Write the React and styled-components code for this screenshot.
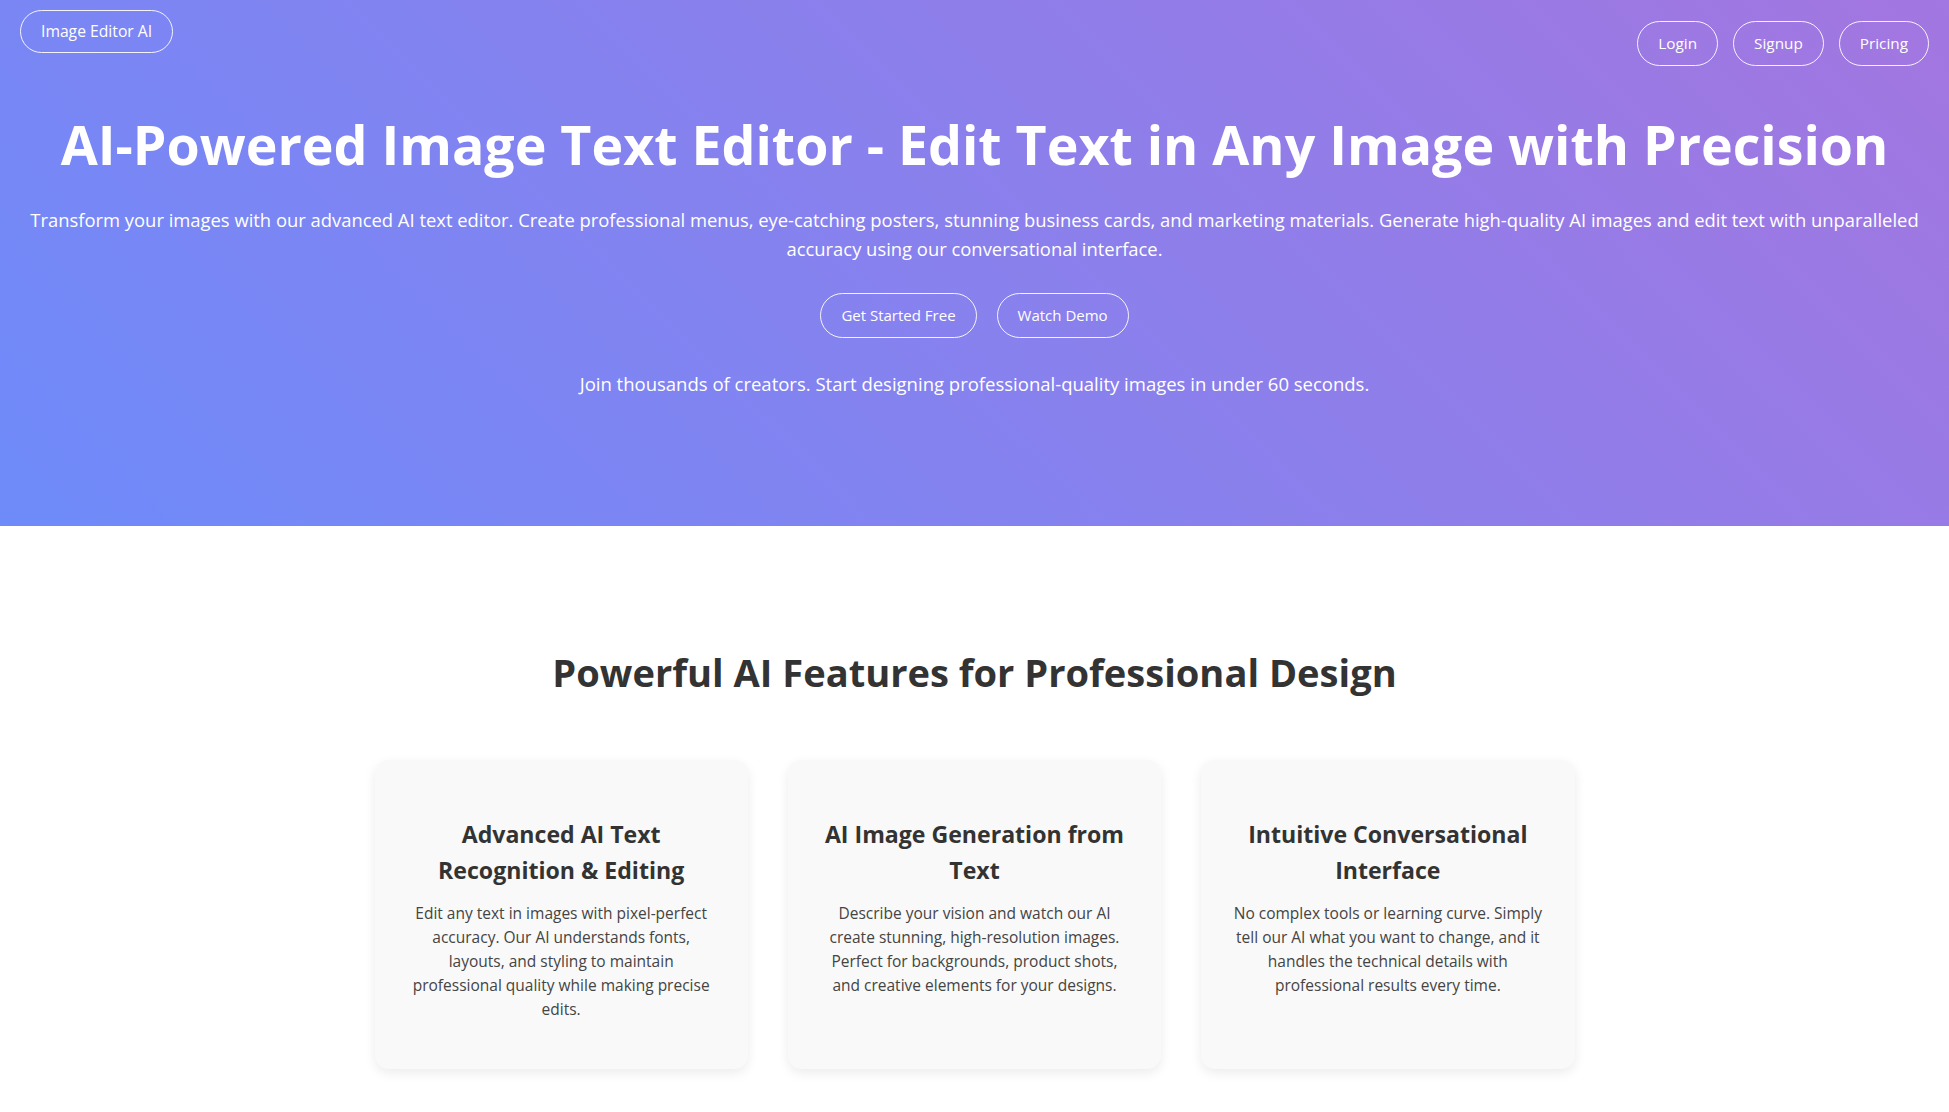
import React from "react";
import styled, { createGlobalStyle } from "styled-components";

const GlobalStyle = createGlobalStyle`
  * {
    box-sizing: border-box;
  }
  body {
    margin: 0;
    background: #ffffff;
    font-family: "Open Sans", "Noto Sans", sans-serif;
    color: #333;
  }
`;

const features = [
  {
    title: "Advanced AI Text Recognition & Editing",
    text: "Edit any text in images with pixel-perfect accuracy. Our AI understands fonts, layouts, and styling to maintain professional quality while making precise edits.",
  },
  {
    title: "AI Image Generation from Text",
    text: "Describe your vision and watch our AI create stunning, high-resolution images. Perfect for backgrounds, product shots, and creative elements for your designs.",
  },
  {
    title: "Intuitive Conversational Interface",
    text: "No complex tools or learning curve. Simply tell our AI what you want to change, and it handles the technical details with professional results every time.",
  },
];

const App = () => {
  return (
    <>
      <GlobalStyle />
      <Hero>
        <Header>
          <Brand href="#">Image Editor AI</Brand>
          <Nav>
            <PillButton $size={15.3}>Login</PillButton>
            <PillButton $size={15.3}>Signup</PillButton>
            <PillButton $size={15.3}>Pricing</PillButton>
          </Nav>
        </Header>
        <HeroContent>
          <Title>AI-Powered Image Text Editor - Edit Text in Any Image with Precision</Title>
          <Subtitle>
            Transform your images with our advanced AI text editor. Create professional menus,
            eye-catching posters, stunning business cards, and marketing materials. Generate
            high-quality AI images and edit text with unparalleled accuracy using our
            conversational interface.
          </Subtitle>
          <Actions>
            <PillButton>Get Started Free</PillButton>
            <PillButton>Watch Demo</PillButton>
          </Actions>
          <Note>
            Join thousands of creators. Start designing professional-quality images in under 60
            seconds.
          </Note>
        </HeroContent>
      </Hero>
      <Features>
        <SectionTitle>Powerful AI Features for Professional Design</SectionTitle>
        <CardGrid>
          {features.map((f) => (
            <Card key={f.title}>
              <CardTitle>{f.title}</CardTitle>
              <CardText>{f.text}</CardText>
            </Card>
          ))}
        </CardGrid>
      </Features>
    </>
  );
};

const Hero = styled.section`
  background: linear-gradient(45deg, #6e8bfa 0%, #a376e0 100%);
  color: #ffffff;
  padding-bottom: 127px;
`;
const Header = styled.header`
  display: flex;
  justify-content: space-between;
  align-items: flex-start;
  padding: 10px 20px 0;
`;
const Brand = styled.a`
  display: inline-block;
  padding: 9px 20px;
  border: 1px solid rgba(255, 255, 255, 0.9);
  border-radius: 999px;
  color: #ffffff;
  text-decoration: none;
  font-size: 15.7px;
  line-height: 23px;
`;
const Nav = styled.nav`
  display: flex;
  gap: 15px;
  margin-top: 11px;
`;
const PillButton = styled.button`
  padding: 10px 20px;
  border: 1px solid rgba(255, 255, 255, 0.9);
  border-radius: 999px;
  background: transparent;
  color: #ffffff;
  font-family: inherit;
  font-size: ${(props) => props.$size || 15}px;
  line-height: 23px;
  cursor: pointer;
`;
const HeroContent = styled.div`
  display: flex;
  flex-direction: column;
  align-items: center;
  padding: 0 20px;
  text-align: center;
`;
const Title = styled.h1`
  margin: 43px 0 0;
  font-size: 53.7px;
  line-height: 72px;
  font-weight: 700;
`;
const Subtitle = styled.p`
  margin: 25px 0 0;
  font-size: 18.4px;
  line-height: 28.8px;
`;
const Actions = styled.div`
  display: flex;
  gap: 20px;
  margin-top: 29px;
`;
const Note = styled.p`
  margin: 30px 0 0;
  font-size: 18.5px;
  line-height: 31px;
`;
const Features = styled.section`
  padding: 120px 20px 60px;
`;
const SectionTitle = styled.h2`
  margin: 0;
  text-align: center;
  font-size: 38.1px;
  line-height: 52px;
  font-weight: 700;
  color: #333;
`;
const CardGrid = styled.div`
  display: grid;
  grid-template-columns: repeat(3, 1fr);
  gap: 40px;
  max-width: 1200px;
  margin: 62px auto 0;
`;
const Card = styled.div`
  padding: 32px 30px;
  border-radius: 14px;
  background: #f9f9f9;
  box-shadow: 0 4px 12px rgba(0, 0, 0, 0.08);
  text-align: center;
`;
const CardTitle = styled.h3`
  margin: 24px 0 13px;
  font-size: 23.1px;
  line-height: 36px;
  font-weight: 700;
  color: #333;
`;
const CardText = styled.p`
  margin: 0 0 16px;
  font-size: 15.5px;
  line-height: 24px;
  color: #444;
`;

export default App;
